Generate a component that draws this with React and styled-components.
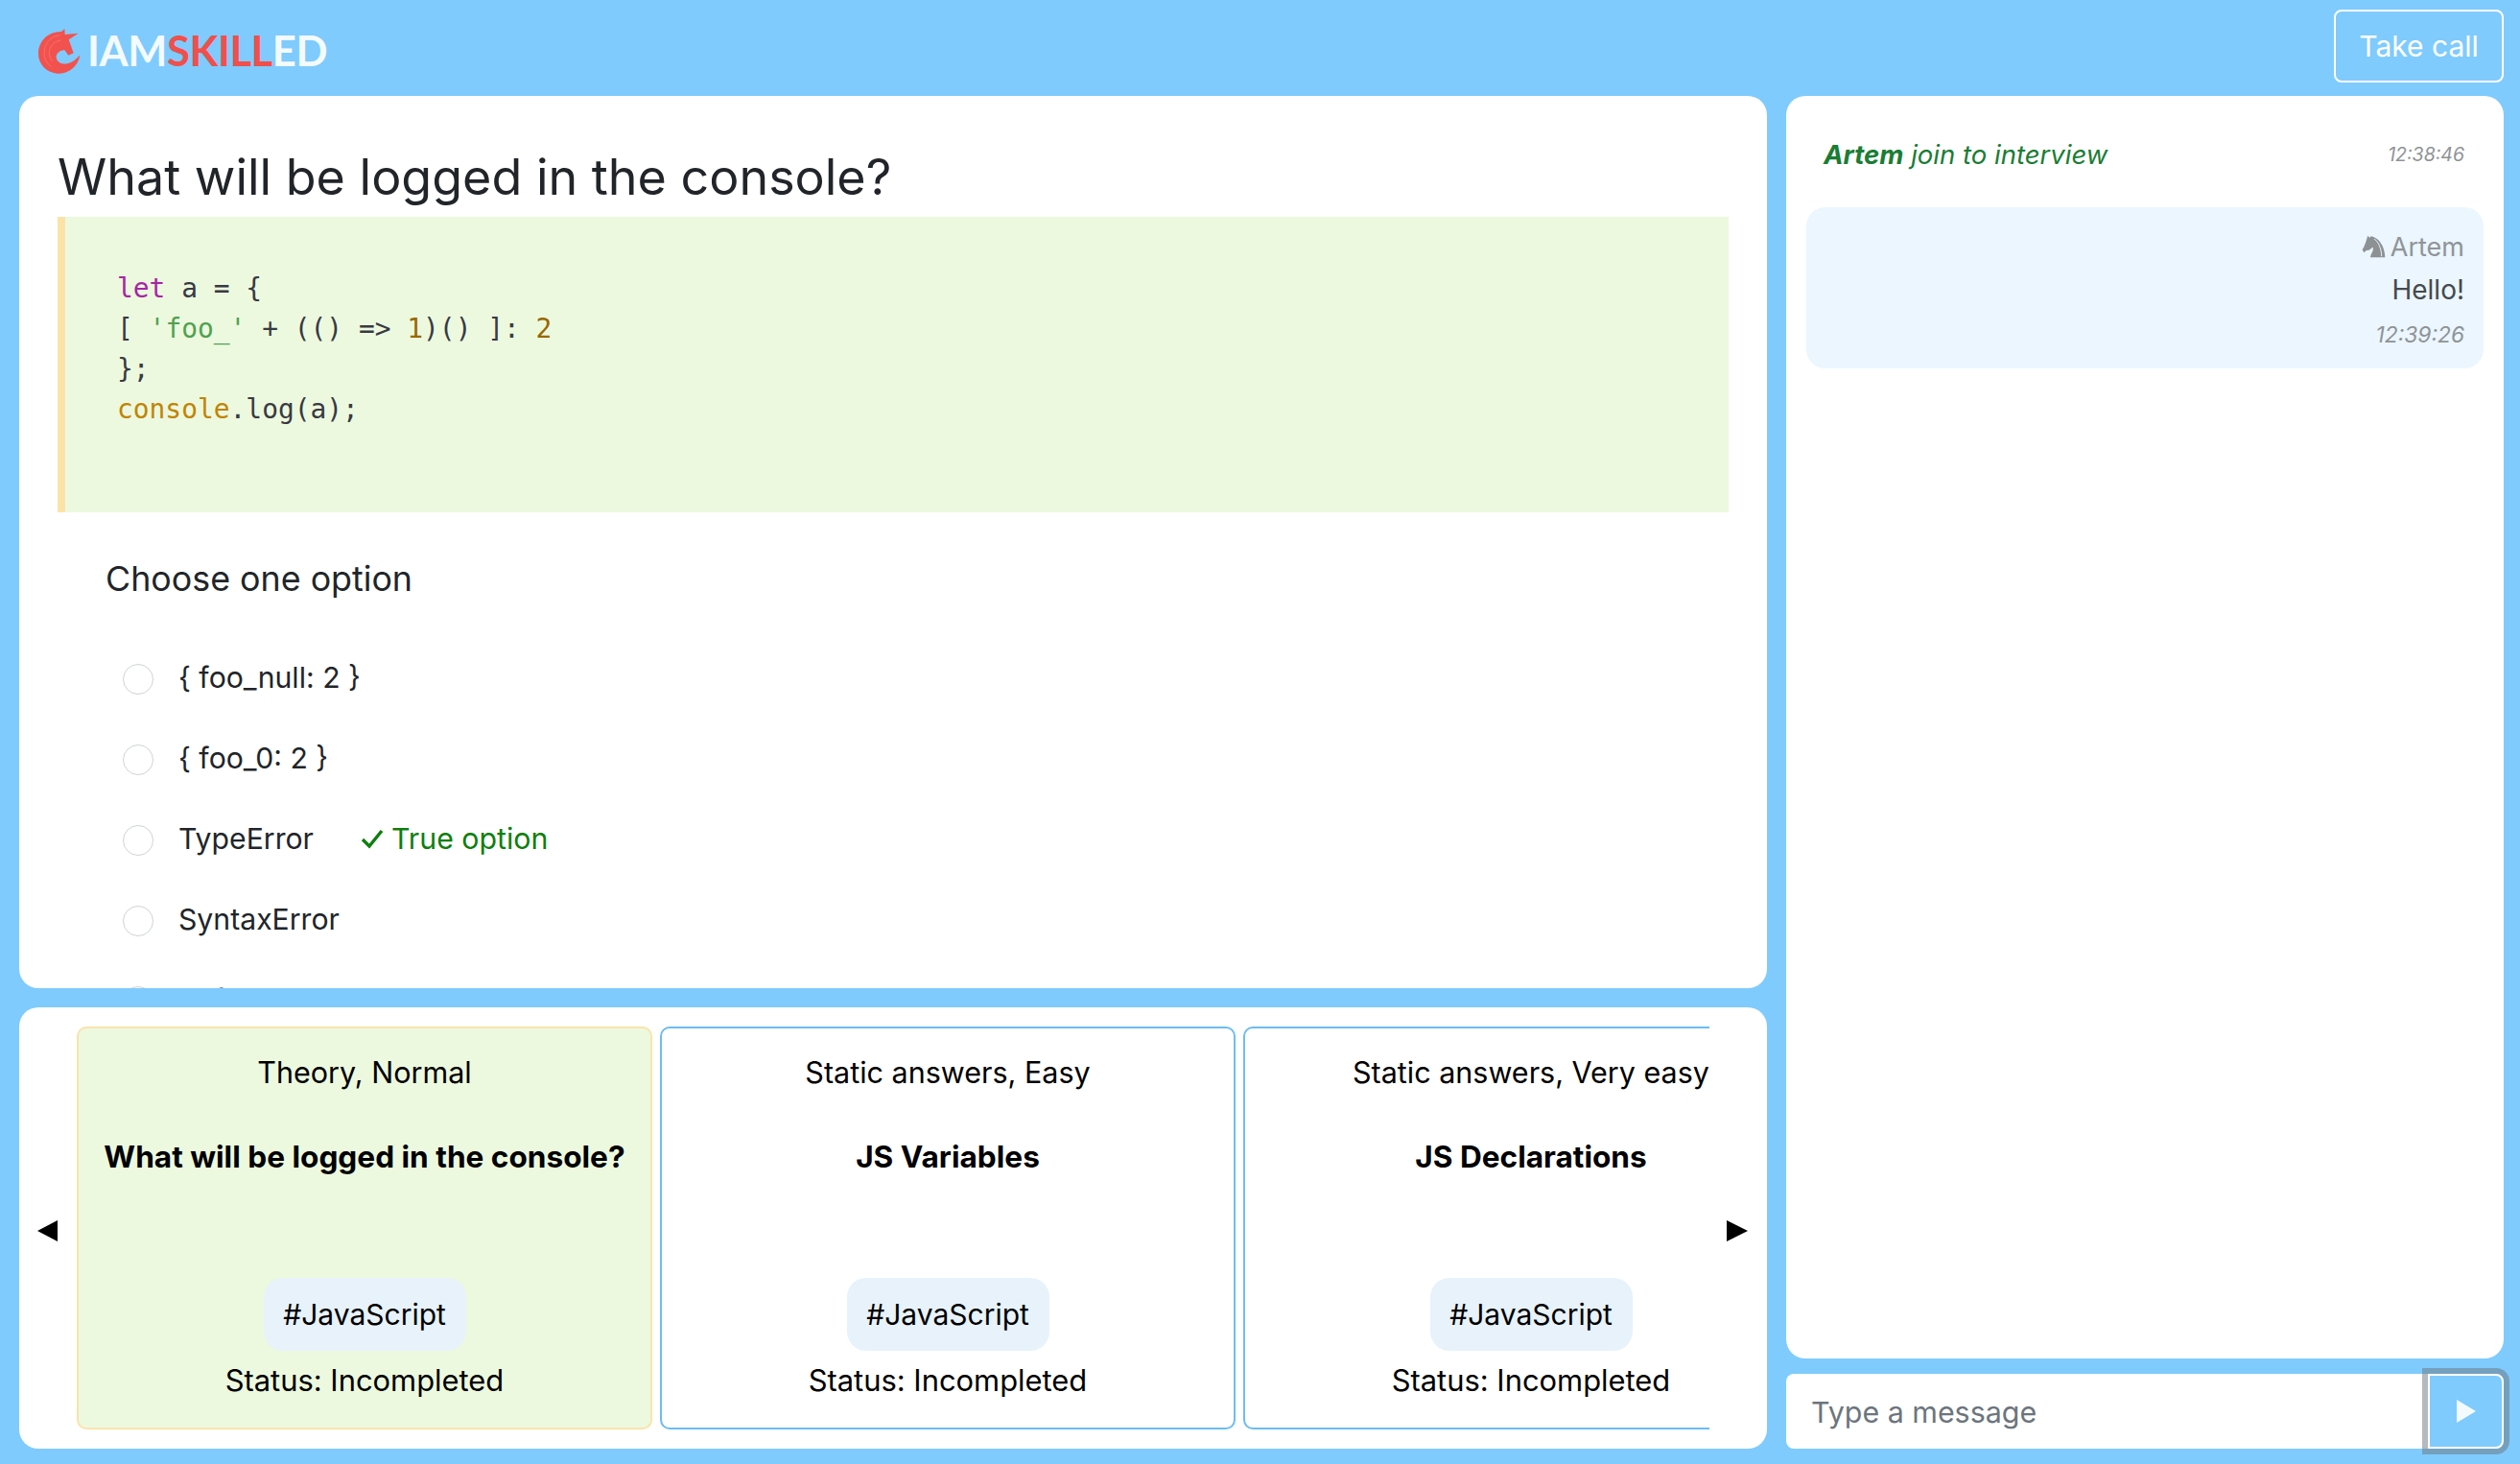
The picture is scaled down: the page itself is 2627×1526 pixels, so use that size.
import React from 'react';
import styled, { createGlobalStyle } from 'styled-components';

const GlobalStyle = createGlobalStyle`
  html, body {
    margin: 0;
    padding: 0;
    height: 100%;
    background: #7fcbfd;
  }
  * {
    box-sizing: border-box;
  }
  body {
    font-family: Inter, "Noto Sans", sans-serif;
    font-size: 30px;
    color: #212529;
    overflow: hidden;
  }
`;

const Page = styled.div`
  width: 2627px;
  height: 1526px;
  background: #7fcbfd;
  display: flex;
  flex-direction: column;
  padding: 0 17px 16px 20px;
`;

const Header = styled.header`
  height: 100px;
  flex: none;
  display: flex;
  align-items: flex-start;
  justify-content: space-between;
  padding-top: 10px;
`;

const Logo = styled.div`
  display: flex;
  align-items: center;
  gap: 14px;
  margin: 14px 0 0 20px;
  font-family: Lato, sans-serif;
  font-weight: 700;
  font-size: 43.5px;
  line-height: 48px;
  letter-spacing: -0.4px;
  color: #f4fbff;
`;

const LogoRed = styled.span`
  color: #f04f4b;
`;

const TakeCall = styled.button`
  width: 177px;
  height: 76px;
  background: transparent;
  border: 2px solid #fff;
  border-radius: 8px;
  color: #fff;
  font: inherit;
  font-size: 30px;
  padding: 0;
`;

const Content = styled.div`
  flex: 1;
  min-height: 0;
  display: grid;
  grid-template-columns: 1822px 748px;
  gap: 20px;
`;

const LeftColumn = styled.div`
  display: flex;
  flex-direction: column;
  gap: 20px;
  min-height: 0;
`;

const Panel = styled.section`
  background: #fff;
  border-radius: 20px;
  overflow: hidden;
`;

const QuestionPanel = styled(Panel)`
  height: 930px;
  flex: none;
  padding: 40px 40px 0;
`;

const Title = styled.h1`
  margin: 0;
  font-size: 52px;
  line-height: 90px;
  height: 86px;
  font-weight: 400;
  color: #212529;
`;

const CodeBlock = styled.pre`
  margin: 0;
  height: 308px;
  padding: 54px 54px 0;
  background: #ecf9df;
  border-left: 8px solid #fde2a8;
  font-family: "DejaVu Sans Mono", monospace;
  font-size: 27.9px;
  line-height: 42px;
  color: #383a42;
`;

const Keyword = styled.span`
  color: ${(p) => p.$color};
`;

const OptionsTitle = styled.div`
  margin: 45px 0 0 50px;
  font-size: 35.8px;
  line-height: 48px;
`;

const Options = styled.div`
  margin: 37px 0 0 68px;
  display: flex;
  flex-direction: column;
`;

const Option = styled.label`
  display: flex;
  align-items: center;
  height: 84px;
  flex: none;
  gap: 26px;
`;

const Radio = styled.span`
  width: 32px;
  height: 32px;
  flex: none;
  border-radius: 50%;
  border: 1px solid #d0d3d6;
  background: #fff;
  position: relative;
  top: 2px;
`;

const OptionText = styled.span`
  font-size: 30.2px;
`;

const TrueOption = styled.span`
  display: flex;
  align-items: center;
  gap: 8px;
  margin-left: 23px;
  color: #0e7f0e;
  font-size: 30.3px;
`;

const TasksPanel = styled(Panel)`
  flex: 1;
  min-height: 0;
  display: flex;
  align-items: center;
  padding: 20px 0;
`;

const Arrow = styled.button`
  flex: none;
  width: 60px;
  margin-top: 6px;
  border: 0;
  background: none;
  display: flex;
  justify-content: ${(p) => (p.$right ? 'flex-start' : 'flex-end')};
  padding: ${(p) => (p.$right ? '0 0 0 18px' : '0 20px 0 0')};
  svg {
    display: block;
  }
`;

const Track = styled.div`
  flex: 1;
  min-width: 0;
  height: 100%;
  display: flex;
  gap: 8px;
  overflow: hidden;
`;

const TaskCard = styled.article`
  flex: none;
  width: 600px;
  height: 100%;
  display: flex;
  flex-direction: column;
  align-items: center;
  padding: 26px 0 0;
  border-radius: 10px;
  border: 2px solid ${(p) => (p.$active ? '#fbe3ab' : '#6cbdf3')};
  background: ${(p) => (p.$active ? '#ecf9df' : '#fff')};
  color: #000;
`;

const TaskKind = styled.div`
  font-size: 30.5px;
  line-height: 40px;
`;

const TaskName = styled.div`
  margin-top: 48px;
  font-size: 31.6px;
  line-height: 40px;
  font-weight: 700;
  flex: 1;
`;

const Tag = styled.div`
  width: 211px;
  height: 76px;
  display: flex;
  align-items: center;
  justify-content: center;
  border-radius: 20px;
  background: #e7f2fb;
  font-size: 30px;
`;

const TaskStatus = styled.div`
  margin: 11px 0 29px;
  font-size: 30.9px;
  line-height: 40px;
`;

const ChatColumn = styled.div`
  display: flex;
  flex-direction: column;
  gap: 16px;
  min-height: 0;
`;

const ChatPanel = styled(Panel)`
  flex: 1;
  min-height: 0;
  padding: 0 21px;
`;

const JoinLine = styled.div`
  height: 116px;
  display: flex;
  align-items: center;
  justify-content: space-between;
  padding: 6px 20px 0 18px;
  color: #1a7d34;
  font-style: italic;
  font-size: 27.5px;
  b {
    font-weight: 700;
  }
`;

const MessageTime = styled.span`
  color: #8f9396;
  font-style: italic;
  font-size: ${(p) => p.$size};
`;

const Bubble = styled.div`
  height: 168px;
  display: flex;
  flex-direction: column;
  align-items: flex-end;
  padding: 20px 20px 0;
  border-radius: 20px;
  background: #ebf6fe;
`;

const Author = styled.div`
  height: 42px;
  display: flex;
  align-items: center;
  gap: 5px;
  font-size: 27px;
  color: #909498;
`;

const MessageText = styled.div`
  height: 46px;
  padding-top: 2px;
  display: flex;
  align-items: center;
  font-size: 28px;
  color: #45494d;
`;

const BubbleTime = styled(MessageTime)`
  margin-top: 11px;
`;

const MessageForm = styled.form`
  height: 78px;
  flex: none;
  display: flex;
  background: #fff;
  border-radius: 8px;
`;

const MessageInput = styled.input`
  flex: 1;
  min-width: 0;
  border: 0;
  outline: 0;
  background: transparent;
  padding: 2px 26px 0;
  font: inherit;
  font-size: 30.4px;
  &::placeholder {
    color: #6c757d;
    opacity: 1;
  }
`;

const SendButton = styled.button`
  width: 79px;
  flex: none;
  display: flex;
  align-items: center;
  justify-content: center;
  padding: 0;
  background: #7fcbfd;
  border: 2px solid #fff;
  border-radius: 0 8px 8px 0;
  box-shadow: 0 0 0 6px rgba(108, 117, 125, 0.5);
`;

const UnicornLogo = () => (
  <svg width="56" height="56" viewBox="0 0 168 168" style={{ margin: '0 -13px 0 -6px' }}>
    <path
      fill="#f2524e"
      d="M100 18 L101 36 L143 32 L113 52 L128 94 L112 101 L100 85 C88 84 73 94 74 108 C76 124 94 130 108 127 C125 124 138 112 148 100 C144 132 116 158 84 158 C46 158 18 130 18 95 C18 58 48 28 84 28 C90 28 95 24 100 18 Z"
    />
    <path
      fill="none"
      stroke="#f77471"
      strokeWidth="2.5"
      d="M86 38 C58 40 36 64 36 94 C36 112 44 126 58 136 M88 54 C68 56 52 72 52 94 C52 104 56 114 62 120"
    />
  </svg>
);

const KnightIcon = () => (
  <svg width="25" height="26" viewBox="28 28 76 76">
    <path
      fill="#8e9194"
      d="M47 32 L53 38 L58 33 C82 38 100 62 102 100 L55 100 C57 86 68 78 63 68 C56 72 51 80 43 78 L35 85 L30 76 C38 62 42 50 47 32 Z"
    />
    <path fill="none" stroke="#ebf6fe" strokeWidth="3" d="M68 42 C82 52 90 72 91 97" />
  </svg>
);

const LeftTriangle = () => (
  <svg width="21" height="22" viewBox="0 0 21 22">
    <path fill="#000" d="M0 11 L21 0 V22 Z" />
  </svg>
);

const RightTriangle = () => (
  <svg width="22" height="22" viewBox="0 0 22 22">
    <path fill="#000" d="M22 11 L0 0 V22 Z" />
  </svg>
);

const Check = () => (
  <svg width="24" height="22" viewBox="0 0 24 22">
    <path fill="none" stroke="#0e7f0e" strokeWidth="3.4" d="M2 12 L9 19 L22 3" />
  </svg>
);

const tasks = [
  { kind: 'Theory, Normal', name: 'What will be logged in the console?', active: true },
  { kind: 'Static answers, Easy', name: 'JS Variables' },
  { kind: 'Static answers, Very easy', name: 'JS Declarations' },
];

const App = () => (
  <Page>
    <GlobalStyle />
    <Header>
      <Logo>
        <UnicornLogo />
        <span>
          IAM<LogoRed>SKILL</LogoRed>ED
        </span>
      </Logo>
      <TakeCall type="button">Take call</TakeCall>
    </Header>
    <Content>
      <LeftColumn>
        <QuestionPanel>
          <Title>What will be logged in the console?</Title>
          <CodeBlock>
            <Keyword $color="#a626a4">let</Keyword> a = {'{'}
            {'\n'}[ <Keyword $color="#50a14f">'foo_'</Keyword> + (() =&gt; <Keyword $color="#986801">1</Keyword>)() ]:{' '}
            <Keyword $color="#986801">2</Keyword>
            {'\n'}
            {'};'}
            {'\n'}
            <Keyword $color="#c18401">console</Keyword>.log(a);
          </CodeBlock>
          <OptionsTitle>Choose one option</OptionsTitle>
          <Options>
            <Option>
              <Radio />
              <OptionText>{'{ foo_null: 2 }'}</OptionText>
            </Option>
            <Option>
              <Radio />
              <OptionText>{'{ foo_0: 2 }'}</OptionText>
            </Option>
            <Option>
              <Radio />
              <OptionText>TypeError</OptionText>
              <TrueOption>
                <Check />
                True option
              </TrueOption>
            </Option>
            <Option>
              <Radio />
              <OptionText>SyntaxError</OptionText>
            </Option>
            <Option>
              <Radio />
              <OptionText>ReferenceError</OptionText>
            </Option>
          </Options>
        </QuestionPanel>
        <TasksPanel>
          <Arrow type="button">
            <LeftTriangle />
          </Arrow>
          <Track>
            {tasks.map((task) => (
              <TaskCard key={task.name} $active={task.active}>
                <TaskKind>{task.kind}</TaskKind>
                <TaskName>{task.name}</TaskName>
                <Tag>#JavaScript</Tag>
                <TaskStatus>Status: Incompleted</TaskStatus>
              </TaskCard>
            ))}
          </Track>
          <Arrow type="button" $right>
            <RightTriangle />
          </Arrow>
        </TasksPanel>
      </LeftColumn>
      <ChatColumn>
        <ChatPanel>
          <JoinLine>
            <span>
              <b>Artem</b> join to interview
            </span>
            <MessageTime $size="19.5px">12:38:46</MessageTime>
          </JoinLine>
          <Bubble>
            <Author>
              <KnightIcon />
              Artem
            </Author>
            <MessageText>Hello!</MessageText>
            <BubbleTime $size="22.8px">12:39:26</BubbleTime>
          </Bubble>
        </ChatPanel>
        <MessageForm>
          <MessageInput placeholder="Type a message" />
          <SendButton type="button">
            <svg width="20" height="24" viewBox="0 0 20 24">
              <path fill="#f4fbff" d="M0 0 L20 12 L0 24 Z" />
            </svg>
          </SendButton>
        </MessageForm>
      </ChatColumn>
    </Content>
  </Page>
);

export default App;
